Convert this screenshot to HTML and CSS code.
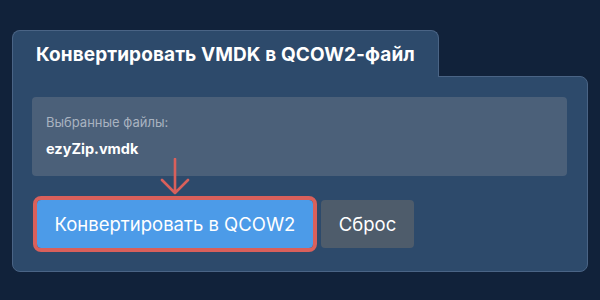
FILE: index.html
```html
<!DOCTYPE html>
<html lang="ru">
<head>
    <meta charset="UTF-8">
    <meta name="viewport" content="width=device-width, initial-scale=1.0">
    <title>Конвертировать VMDK в QCOW2</title>
    <link rel="stylesheet" href="styles.css">
</head>
<body>

    <div class="converter">
        <div class="tab">Конвертировать VMDK в QCOW2-файл</div>

        <div class="panel">
            <div class="files">
                <div class="files-label">Выбранные файлы:</div>
                <div class="files-name">ezyZip.vmdk</div>
            </div>

            <div class="actions">
                <div class="convert-wrap">
                    <!-- стрелка-подсказка -->
                    <svg class="hint-arrow" width="30" height="38" viewBox="0 0 30 38">
                        <path d="M15 1 V35 M2 22 L15 35 L28 22" fill="none" stroke="#d9605b" stroke-width="2.6" stroke-linecap="round" stroke-linejoin="round"/>
                    </svg>
                    <button class="btn btn-convert">Конвертировать в QCOW2</button>
                </div>
                <button class="btn btn-reset">Сброс</button>
            </div>
        </div>
    </div>

</body>
</html>
```

FILE: styles.css
```css
* {
    margin: 0;
    padding: 0;
    box-sizing: border-box;
}

body {
    background-color: #11223a;
    font-family: Inter, "Noto Sans", sans-serif;
    color: #fff;
}

.converter {
    padding: 30px 12px 0 12px;
}

.tab {
    position: relative;
    z-index: 1;
    width: 427px;
    height: 47px;
    margin-bottom: -1px;
    padding: 12px 0 0 23px;
    background-color: #2d4a6b;
    border: 1px solid #4a6485;
    border-bottom: none;
    border-radius: 8px 8px 0 0;
    font-size: 19px;
    font-weight: 700;
    letter-spacing: 0.1px;
}

.panel {
    width: 576px;
    height: 196px;
    padding: 20px 20px 0 19px;
    background-color: #2d4a6b;
    border: 1px solid #4a6485;
    border-radius: 0 8px 8px 8px;
}

.files {
    height: 79px;
    padding: 16px 14px;
    background-color: #4b6079;
    border-radius: 4px;
}

.files-label {
    font-size: 13px;
    line-height: 18px;
    color: #a9b3c0;
}

.files-name {
    margin-top: 8px;
    font-size: 14.5px;
    line-height: 20px;
    font-weight: 700;
}

.actions {
    display: flex;
    gap: 8px;
    margin-top: 24px;
    padding-left: 5px;
}

.convert-wrap {
    position: relative;
}

.hint-arrow {
    position: absolute;
    left: 123px;
    top: -42px;
}

.btn {
    height: 48px;
    border: none;
    border-radius: 4px;
    font-family: Inter, "Noto Sans", sans-serif;
    font-size: 18.5px;
    color: #fff;
    cursor: pointer;
}

.btn-convert {
    width: 276px;
    background-color: #4c9be8;
    outline: 4px solid #d9605b;
}

.btn-reset {
    width: 93px;
    background-color: #4e5c6b;
}
```
